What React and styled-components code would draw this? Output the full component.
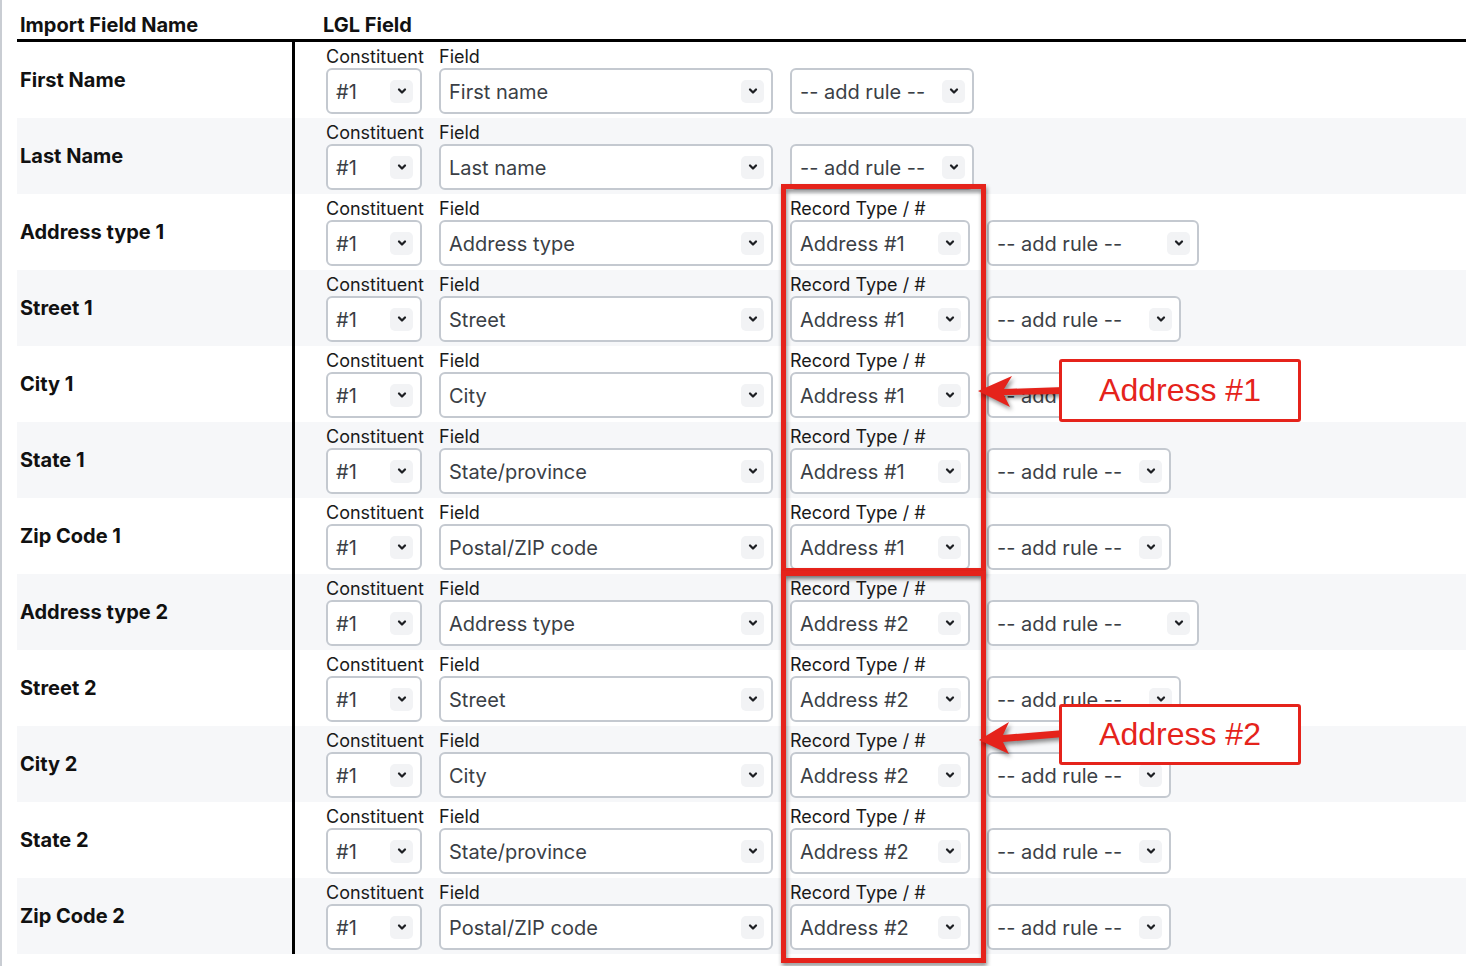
import React from 'react';
import styled, { createGlobalStyle } from 'styled-components';

const RED = '#e5231b';

const GlobalStyle = createGlobalStyle`
  html, body {
    margin: 0;
    padding: 0;
    background: #fff;
  }
  body {
    font-family: Inter, "Noto Sans", sans-serif;
    color: #111;
  }
`;

const Screen = styled.div`
  position: relative;
  width: 1466px;
  height: 966px;
  overflow: hidden;
`;

const Page = styled.div`
  box-sizing: border-box;
  height: 100%;
  border-left: 2px solid #c9cdd3;
  padding-left: 15px;
`;

const HeaderRow = styled.div`
  display: grid;
  grid-template-columns: 278px 1fr;
  height: 39px;
  border-bottom: 3px solid #000;
`;

const HeaderCell = styled.div`
  padding-top: 13px;
  padding-left: ${p => p.$indent}px;
  font-size: 20px;
  line-height: 24px;
  font-weight: 700;
  color: #111;
`;

const Row = styled.div`
  display: grid;
  grid-template-columns: 278px 1fr;
  height: 76px;
  background: ${p => (p.$alt ? '#f6f7f9' : '#fff')};
`;

const NameCell = styled.div`
  box-sizing: border-box;
  display: flex;
  align-items: center;
  padding-left: 3px;
  border-right: 3px solid #000;
  font-size: 20px;
  font-weight: 700;
  color: #111;
`;

const FieldsCell = styled.div`
  box-sizing: border-box;
  display: flex;
  align-items: flex-end;
  gap: 17px;
  padding: 4px 0 4px 31px;
`;

const Group = styled.div`
  display: flex;
  flex-direction: column;
  width: ${p => p.$w}px;
`;

const Label = styled.div`
  height: 22px;
  line-height: 22px;
  font-size: 18px;
  color: #1a1a1a;
  white-space: nowrap;
`;

const SelectBox = styled.div`
  box-sizing: border-box;
  height: 46px;
  display: flex;
  align-items: center;
  justify-content: space-between;
  padding: 0 7px 0 8px;
  border: 2px solid #c4c9d0;
  border-radius: 6px;
  background: #fff;
  font-size: 20px;
  color: #3b3f46;
  white-space: nowrap;

  & > span:first-child {
    padding-top: 1px;
  }
`;

const Chevron = styled.span`
  flex: none;
  width: 23px;
  height: 23px;
  display: flex;
  align-items: center;
  justify-content: center;
  border-radius: 5px;
  background: #f2f3f5;
`;

const Frame = styled.div`
  position: absolute;
  left: ${p => p.$x}px;
  top: ${p => p.$y}px;
  width: ${p => p.$w}px;
  height: ${p => p.$h}px;
  box-sizing: border-box;
  border: 5px solid ${RED};
  filter: drop-shadow(1px 3px 2px rgba(0, 0, 0, 0.45));
  pointer-events: none;
`;

const Callout = styled.div`
  position: absolute;
  left: ${p => p.$x}px;
  top: ${p => p.$y}px;
  width: 242px;
  height: ${p => p.$h}px;
  box-sizing: border-box;
  display: flex;
  align-items: center;
  justify-content: center;
  border: 3px solid ${RED};
  border-radius: 3px;
  background: #fff;
  color: ${RED};
  font-family: "Liberation Sans", Arial, sans-serif;
  font-size: 32px;
`;

const Arrows = styled.svg`
  position: absolute;
  left: 0;
  top: 0;
  pointer-events: none;
  filter: drop-shadow(2px 3px 2px rgba(0, 0, 0, 0.45));
`;

function Select({ value }) {
  return (
    <SelectBox>
      <span>{value}</span>
      <Chevron>
        <svg width="12" height="12" viewBox="0 0 24 24" fill="none">
          <path d="M6 9l6 6 6-6" stroke="#1d1f23" strokeWidth="4.5" strokeLinecap="round" strokeLinejoin="round" />
        </svg>
      </Chevron>
    </SelectBox>
  );
}

const rows = [
  { name: 'First Name', field: 'First name', rule: 184 },
  { name: 'Last Name', field: 'Last name', rule: 184 },
  { name: 'Address type 1', field: 'Address type', rec: 'Address #1', rule: 212 },
  { name: 'Street 1', field: 'Street', rec: 'Address #1', rule: 194 },
  { name: 'City 1', field: 'City', rec: 'Address #1', rule: 184 },
  { name: 'State 1', field: 'State/province', rec: 'Address #1', rule: 184 },
  { name: 'Zip Code 1', field: 'Postal/ZIP code', rec: 'Address #1', rule: 184 },
  { name: 'Address type 2', field: 'Address type', rec: 'Address #2', rule: 212 },
  { name: 'Street 2', field: 'Street', rec: 'Address #2', rule: 194 },
  { name: 'City 2', field: 'City', rec: 'Address #2', rule: 184 },
  { name: 'State 2', field: 'State/province', rec: 'Address #2', rule: 184 },
  { name: 'Zip Code 2', field: 'Postal/ZIP code', rec: 'Address #2', rule: 184 },
];

export default function App() {
  return (
    <>
      <GlobalStyle />
      <Screen>
        <Page>
          <HeaderRow>
            <HeaderCell $indent={3}>Import Field Name</HeaderCell>
            <HeaderCell $indent={28}>LGL Field</HeaderCell>
          </HeaderRow>
          {rows.map((r, i) => (
            <Row key={r.name} $alt={i % 2 === 1}>
              <NameCell>{r.name}</NameCell>
              <FieldsCell>
                <Group $w={96}>
                  <Label>Constituent</Label>
                  <Select value="#1" />
                </Group>
                <Group $w={334}>
                  <Label>Field</Label>
                  <Select value={r.field} />
                </Group>
                {r.rec && (
                  <Group $w={180}>
                    <Label>Record Type / #</Label>
                    <Select value={r.rec} />
                  </Group>
                )}
                <Group $w={r.rule}>
                  <Select value="-- add rule --" />
                </Group>
              </FieldsCell>
            </Row>
          ))}
        </Page>

        <Frame $x={781} $y={184} $w={205} $h={389} />
        <Frame $x={781} $y={571} $w={205} $h={392} />

        <Arrows width="1466" height="966">
          <path d="M978 391 L1012 376 L1004 389 L1064 387 L1064 394 L1004 395 L1010 407 Z" fill={RED} />
          <path d="M979 740 L1009 722 L1003 735 L1064 730 L1064 737 L1003 742 L1009 754 Z" fill={RED} />
        </Arrows>

        <Callout $x={1059} $y={359} $h={63}>Address #1</Callout>
        <Callout $x={1059} $y={704} $h={61}>Address #2</Callout>
      </Screen>
    </>
  );
}
